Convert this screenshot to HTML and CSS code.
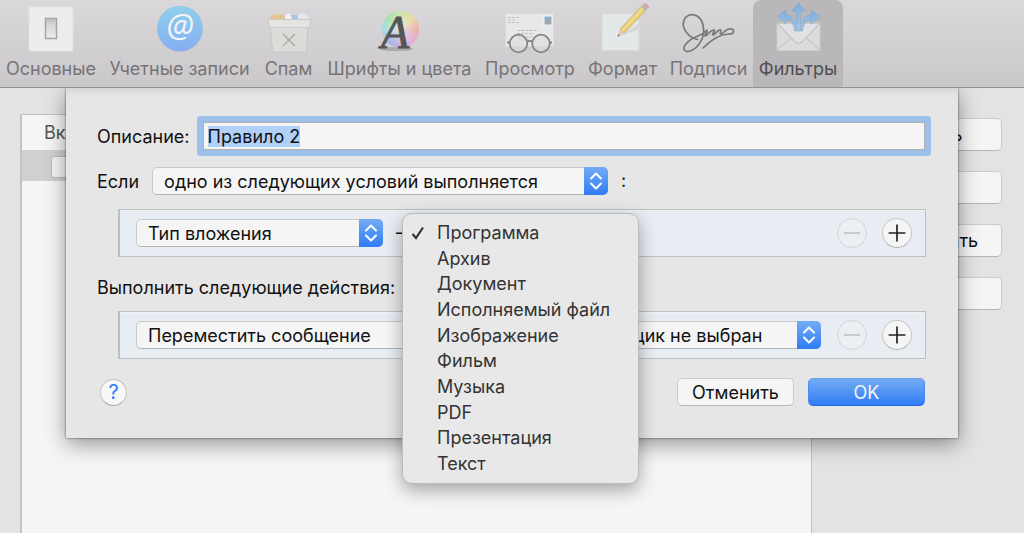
FILE: index.html
```html
<!DOCTYPE html>
<html lang="ru">
<head>
<meta charset="utf-8">
<title>Фильтры</title>
<link rel="stylesheet" href="styles.css">
</head>
<body>
<svg class="defs" aria-hidden="true">
  <defs>
    <linearGradient id="sky" x1="0" y1="0" x2="0" y2="1"><stop offset="0" stop-color="#8fcfec"/><stop offset="1" stop-color="#86aef3"/></linearGradient>
    <linearGradient id="arrow" x1="0" y1="0" x2="0" y2="1"><stop offset="0" stop-color="#7faedb"/><stop offset="1" stop-color="#a3c8e8"/></linearGradient>
    <linearGradient id="key" x1="0" y1="0" x2="0" y2="1"><stop offset="0" stop-color="#c9cacb"/><stop offset="1" stop-color="#eceeef"/></linearGradient>
    <symbol id="updown" viewBox="0 0 24 28"><path d="M7 11.500 12 6.500 17 11.500M7 16.500 12 21.500 17 16.500" fill="none" stroke="#fff" stroke-width="2" stroke-linecap="round" stroke-linejoin="round"/></symbol>
    <symbol id="minus" viewBox="0 0 30 30"><path d="M6 15H24" stroke="currentColor" stroke-width="1.500"/></symbol>
    <symbol id="plus" viewBox="0 0 30 30"><path d="M6 15H24M15 6V24" stroke="currentColor" stroke-width="1.800"/></symbol>
  </defs>
</svg>

<header class="toolbar">
  <button class="tool" type="button">
    <svg class="tool-icon" viewBox="0 0 64 56" aria-hidden="true"><rect x="10" y="7" width="44" height="44" fill="#ebedee" stroke="#dfe1e2"/><rect x="26.500" y="18.500" width="11" height="20" fill="url(#key)" stroke="#a5a5a5" stroke-width="1.500"/><path d="M28 21H36" stroke="#bbb"/></svg>
    <span>Основные</span>
  </button>
  <button class="tool" type="button">
    <svg class="tool-icon" viewBox="0 0 64 56" aria-hidden="true"><circle cx="32" cy="29" r="23" fill="#aaa" opacity=".4"/><circle cx="32" cy="28.500" r="22.700" fill="url(#sky)"/><text class="at-sign" x="32" y="38" text-anchor="middle">@</text></svg>
    <span>Учетные записи</span>
  </button>
  <button class="tool" type="button">
    <svg class="tool-icon" viewBox="0 0 64 56" aria-hidden="true"><path d="M13 20 14 15 25 14 28 17 31 20Z" fill="#e3c492"/><path d="M28 16 32 13 37 20H28Z" fill="#f1f2f3"/><path d="M34 15 40 15 42 20H35Z" fill="#a9c5df"/><path d="M41 15 46 13 52 17 50 20H41Z" fill="#dfe8ee"/><path d="M13 27H51L49 52H16Z" fill="#dcdcdb" stroke="#c7c7c6"/><path d="M11 19.500H54L52.500 27.500H12.500Z" fill="#e4e4e3" stroke="#c9c9c8"/><path d="M26 34 38 46M38 34 26 46" stroke="#b1aea9" stroke-width="1.700"/></svg>
    <span>Спам</span>
  </button>
  <button class="tool" type="button">
    <svg class="tool-icon" viewBox="0 0 64 56" aria-hidden="true"><ellipse cx="28" cy="49" rx="17" ry="2" fill="#888" opacity=".5"/><foreignObject x="14" y="11" width="38" height="38"><div class="wheel"></div></foreignObject><text class="font-letter" x="13" y="48">A</text></svg>
    <span>Шрифты и цвета</span>
  </button>
  <button class="tool" type="button">
    <svg class="tool-icon" viewBox="0 0 64 56" aria-hidden="true"><rect x="7.500" y="13.500" width="48" height="33" fill="#e6e8e9" stroke="#d8dadb"/><path d="M10 17.500H21M10 20H17M10 22.500H21M19 30.500H40M19 33.500H36M20 37H35M20 40H32" stroke="#bfc1c3" stroke-dasharray="3 1"/><rect x="46" y="16" width="8" height="9" fill="#86aecf" stroke="#f3f5f6"/><path d="M50 18 53 24H48Z" fill="#b6a48b"/><g fill="#d9dbdc" fill-opacity=".5" stroke="#838485" stroke-width="1.800"><circle cx="20.500" cy="43.500" r="8.800"/><circle cx="43" cy="43.500" r="8.800"/><path d="M29 42Q31.700 39.500 34.300 42M9 42.500H12M51.500 42.500H54" fill="none"/></g></svg>
    <span>Просмотр</span>
  </button>
  <button class="tool" type="button">
    <svg class="tool-icon" viewBox="0 0 64 56" aria-hidden="true"><rect x="11" y="13.500" width="37" height="37" fill="#e5e8e8" stroke="#d7d9da"/><path d="M28 36 48 24 47 30Z" fill="#c8caca" opacity=".5"/><path d="M26.500 37 29 29 33.500 33Z" fill="#dfcdb5"/><path d="M26.500 37 27.500 34 29 35.500Z" fill="#777"/><path d="M29 29 50 6.500 54.500 11 33.500 33Z" fill="#e8cd77" stroke="#c2a665" stroke-width=".6"/><path d="M31 31 52 8.500" stroke="#f3dfa0" stroke-width="1.500"/><path d="M50 6.500 52 4.500 56.500 8.800 54.500 11Z" fill="#b5b9bc"/><path d="M52 4.500Q54.500 2.500 57 5T56.500 8.800Z" fill="#d99fa7"/></svg>
    <span>Формат</span>
  </button>
  <button class="tool" type="button">
    <svg class="tool-icon" viewBox="0 0 64 56" aria-hidden="true"><path d="M20.500 39.500C12 38 5 29 6.500 22C8 15 15 13 20 16C27 20 28 32 25 39C21 48 13 53 8.500 51C3 48 12 39 21 36C27 34 29 31 30 30C31 31 27 36 28 36C31 35 33 30 37 30C39 30 34 35 36 35C38 35 41 29 43.500 30C45 31 42 34 44 34C46 34 49 29 52 29C58 28 58 34 52 34C42 34 33 41 26 48" fill="none" stroke="#777678" stroke-width="1.700" stroke-linecap="round" stroke-linejoin="round"/></svg>
    <span>Подписи</span>
  </button>
  <button class="tool tool-active" type="button" aria-pressed="true">
    <svg class="tool-icon" viewBox="0 0 64 56" aria-hidden="true"><rect x="11" y="22.500" width="43" height="28" fill="#d9dbdc" stroke="#cbcdce"/><path d="M11 50 27 36M54 50 38 36" stroke="#bcbebf" fill="none"/><path d="M11 23 29 42Q32.500 45 36 42L54 23Z" fill="#dfe1e2" stroke="#b4b6b7"/><g fill="url(#arrow)" stroke="#84aacd" stroke-width=".6"><path d="M30.500 31V11H25.500L32.500 3 39.500 11H34.500V31Z"/><path d="M28.500 31Q28 21 20 19V24L11 16.500 20 10V14.500Q30 16 30 31Z"/><path d="M36.500 31Q37 21 45 19V24L54 16.500 45 10V14.500Q35 16 35 31Z"/></g></svg>
    <span>Фильтры</span>
  </button>
</header>

<main class="content">
  <table class="rules">
    <thead><tr><th>Вкл.</th></tr></thead>
    <tbody><tr><td><input class="rule-check" type="checkbox" aria-label="Включить правило"></td></tr></tbody>
  </table>
  <div class="side">
    <button class="button side-button" type="button">Добавить</button>
    <button class="button side-button" type="button">Правка</button>
    <button class="button side-button" type="button">Дублировать</button>
    <button class="button side-button" type="button">Удалить</button>
  </div>

  <form class="sheet">
    <div class="row">
      <label for="description">Описание:</label>
      <input class="description" id="description" type="text" value="Правило 2" autofocus>
    </div>
    <div class="row row-match">
      <label for="match">Если</label>
      <span class="popup popup-match"><select id="match"><option>одно из следующих условий выполняется</option></select><svg class="popup-cap" aria-hidden="true"><use href="#updown"/></svg></span>
      <span>:</span>
    </div>
    <div class="box box-conditions">
      <span class="popup popup-field"><select aria-label="Условие"><option>Тип вложения</option></select><svg class="popup-cap" aria-hidden="true"><use href="#updown"/></svg></span>
      <span class="dash">–</span>
      <div class="kind">
        <ul class="menu" role="menu">
          <li><button class="menu-item" type="button" role="menuitemradio" aria-checked="true"><svg class="tick" viewBox="0 0 14 14" aria-hidden="true"><path d="M1.500 8 5 12 12 1.500" fill="none" stroke="#333" stroke-width="2.200"/></svg>Программа</button></li>
          <li><button class="menu-item" type="button" role="menuitemradio" aria-checked="false">Архив</button></li>
          <li><button class="menu-item" type="button" role="menuitemradio" aria-checked="false">Документ</button></li>
          <li><button class="menu-item" type="button" role="menuitemradio" aria-checked="false">Исполняемый файл</button></li>
          <li><button class="menu-item" type="button" role="menuitemradio" aria-checked="false">Изображение</button></li>
          <li><button class="menu-item" type="button" role="menuitemradio" aria-checked="false">Фильм</button></li>
          <li><button class="menu-item" type="button" role="menuitemradio" aria-checked="false">Музыка</button></li>
          <li><button class="menu-item" type="button" role="menuitemradio" aria-checked="false">PDF</button></li>
          <li><button class="menu-item" type="button" role="menuitemradio" aria-checked="false">Презентация</button></li>
          <li><button class="menu-item" type="button" role="menuitemradio" aria-checked="false">Текст</button></li>
        </ul>
      </div>
      <div class="steppers">
        <button class="round" type="button" aria-label="Удалить условие" disabled><svg aria-hidden="true"><use href="#minus"/></svg></button>
        <button class="round" type="button" aria-label="Добавить условие"><svg aria-hidden="true"><use href="#plus"/></svg></button>
      </div>
    </div>
    <p class="caption">Выполнить следующие действия:</p>
    <div class="box box-actions">
      <span class="popup popup-action"><select aria-label="Действие"><option>Переместить сообщение</option></select><svg class="popup-cap" aria-hidden="true"><use href="#updown"/></svg></span>
      <span class="popup popup-mailbox"><select aria-label="Почтовый ящик"><option>Ящик не выбран</option></select><svg class="popup-cap" aria-hidden="true"><use href="#updown"/></svg></span>
      <div class="steppers">
        <button class="round" type="button" aria-label="Удалить действие" disabled><svg aria-hidden="true"><use href="#minus"/></svg></button>
        <button class="round" type="button" aria-label="Добавить действие"><svg aria-hidden="true"><use href="#plus"/></svg></button>
      </div>
    </div>
    <div class="footer">
      <button class="help" type="button" aria-label="Справка">?</button>
      <button class="button sheet-button" type="button">Отменить</button>
      <button class="button sheet-button primary" type="submit">OK</button>
    </div>
  </form>
</main>
<script src="main.js"></script>
</body>
</html>
```

FILE: main.js
```js
const description = document.getElementById("description");
description.focus();
description.select();
```

FILE: styles.css
```css
* { box-sizing: border-box; }

body {
  margin: 0;
  min-height: 100vh;
  display: flex;
  flex-direction: column;
  background: #e3e3e3;
  color: #111;
  font: 18px/24px Inter, "Liberation Sans", sans-serif;
  overflow: hidden;
}

button, input, select { font: inherit; color: inherit; margin: 0; }
button { padding: 0; border: 0; background: none; }
.defs { position: absolute; width: 0; height: 0; }

.toolbar {
  display: grid;
  grid-template-columns: 102px 155px 63px 159px 102px 83px 89px 90px;
  height: 88px;
  background: linear-gradient(#dad8da, #cac8ca);
  border-bottom: 1px solid #929192;
}
.tool {
  display: flex;
  flex-direction: column;
  align-items: center;
  color: #767476;
  white-space: nowrap;
}
.tool-icon { width: 64px; height: 56px; flex: none; overflow: visible; }
.tool span { line-height: 26px; }
.tool-active { background: #b9b7b9; color: #504e50; border-radius: 8px 8px 0 0; }
.at-sign { font: italic 32px "Open Sans", sans-serif; fill: #f2f4f6; }
.font-letter { font: italic 46px "Liberation Serif", serif; fill: #555; stroke: #555; stroke-width: 1px; }
.wheel {
  width: 37px;
  height: 37px;
  border-radius: 50%;
  background: radial-gradient(#e8e8e8cc, #e8e8e800 75%), conic-gradient(#c6e3a0, #ecd99a, #eaa9a0, #e2a8d8, #c7a6e2, #9bb0e6, #9edbe3, #a0e0a4, #c6e3a0);
}

.content {
  position: relative;
  flex: 1;
  display: flex;
  gap: 25px;
  padding: 26px 22px 0 20px;
}
.rules {
  flex: 1;
  border-spacing: 0;
  display: block;
  background: #f5f5f5;
  border: solid #c3c3c3;
  border-width: 1px 1px 0 2px;
}
.rules thead, .rules tbody, .rules tr, .rules th, .rules td { display: block; padding: 0; }
.rules th { padding: 6px 0 5px 22px; text-align: left; font-weight: 400; color: #555; }
.rules td { height: 31px; padding: 6px 0 0 29px; background: #d0d0d0; }
.rule-check {
  appearance: none;
  display: block;
  width: 22px;
  height: 22px;
  background: #f5f5f5;
  border: 1px solid #bbb;
  border-radius: 4px;
}
.side { display: flex; flex-direction: column; gap: 20px; width: 165px; padding-top: 4px; }

.button {
  background: #f5f5f5;
  border: 1px solid #cbcbcb;
  border-bottom-color: #b5b5b5;
  border-radius: 5px;
}
.side-button { height: 33px; }

.sheet {
  position: absolute;
  top: 0;
  left: 66px;
  right: 66px;
  padding: 34px 33px 32px 31px;
  background: linear-gradient(#d6d6d6, #e6e6e6 8px);
  box-shadow: 0 0 2px #0009, 0 6px 20px #0006;
  clip-path: inset(0 -40px -100px -40px);
}
.row { display: flex; align-items: center; gap: 13px; height: 28px; }
.row label { padding-top: 2px; }
.row-match { margin-top: 17px; }
.description {
  flex: 1;
  min-width: 0;
  height: 28px;
  padding: 1px 4px 0;
  background: #f5f5f5;
  border: 1px solid #b0b0b0;
  outline: 0;
  box-shadow: 0 0 0 6px #9cbfeb;
  border-radius: 1px;
}
.description::selection { background: #b0d0f7; color: #111; }

.popup { position: relative; display: flex; height: 28px; }
.popup select {
  appearance: none;
  width: 100%;
  height: 28px;
  padding: 1px 32px 0 11px;
  background: #f5f5f5;
  border: 1px solid #c6c8ca;
  border-bottom-color: #b2b4b6;
  border-radius: 5px;
}
.popup-cap {
  position: absolute;
  top: 0;
  right: 0;
  width: 24px;
  height: 28px;
  background: linear-gradient(#74acf3, #2f7cf6);
  border-radius: 0 5px 5px 0;
  pointer-events: none;
}
.popup-match { width: 456px; }
.popup-field { width: 247px; }
.popup-action { width: 320px; }
.popup-mailbox { width: 215px; margin-left: auto; }

.box {
  display: flex;
  align-items: center;
  height: 48px;
  margin: 0 -1px 0 21px;
  padding: 0 13px 0 16px;
  background: #e8edf3;
  border: 2px solid #bcbec0;
  border-width: 1px 1px 1px 2px;
  box-shadow: inset 0 1px #f0f2f4;
}
.box-conditions { margin-top: 14px; }
.dash { margin-left: 13px; width: 6px; }
.kind { position: relative; align-self: stretch; flex: 1; }
.steppers { display: flex; gap: 15px; margin-left: 16px; }
.round {
  width: 30px;
  height: 30px;
  border: 1px solid #c6c6c6;
  border-bottom-color: #aaa;
  border-radius: 50%;
  background: #f5f5f5;
  color: #222;
}
.round svg { display: block; width: 28px; height: 28px; }
.round:disabled { color: #b9bcbe; background: #eceff2; border-color: #d2d5d8; }

.caption { margin: 19px 0 11px; }
.footer { display: flex; align-items: center; gap: 14px; margin-top: 19px; }
.help {
  width: 27px;
  height: 27px;
  margin: 0 auto 0 3px;
  border: 1px solid #c2c2c2;
  border-bottom-color: #aaa;
  border-radius: 50%;
  background: #f7f7f7;
  color: #2a7cf7;
  font-size: 20px;
}
.sheet-button { height: 28px; width: 117px; padding-top: 1px; }
.primary {
  color: #f5f5f5;
  background: linear-gradient(#74acf3, #2f7cf6);
  border-color: #6aa2ee #4d8df0 #2468e0;
}

.menu {
  position: absolute;
  z-index: 1;
  top: 3px;
  left: 0;
  display: grid;
  grid-auto-rows: 1fr;
  width: 237px;
  height: 271px;
  margin: 0;
  padding: 6px 0;
  list-style: none;
  background: #e8e8e8;
  border: 1px solid #b9bbbc;
  border-radius: 10px;
  box-shadow: 0 6px 18px #0005;
  color: #333;
}
.menu-item {
  position: relative;
  display: block;
  width: 100%;
  height: 100%;
  padding-left: 34px;
  text-align: left;
}
.tick { position: absolute; left: 8px; top: 6px; width: 14px; height: 14px; }
```
